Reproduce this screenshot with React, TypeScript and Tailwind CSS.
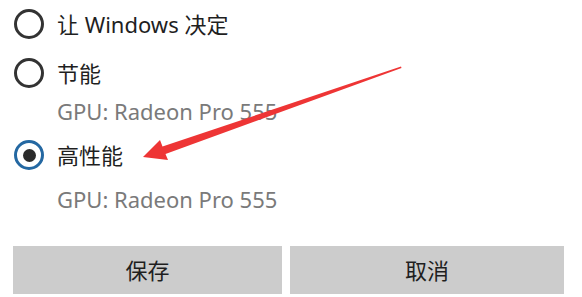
const font = { fontFamily: '"Noto Sans", "Noto Sans CJK SC", sans-serif' };

function Radio({ checked }: { checked?: boolean }) {
  if (checked) {
    return (
      <span className="flex h-[30px] w-[30px] shrink-0 items-center justify-center rounded-full border-[3px] border-[#2468a2] bg-white">
        <span className="h-[13px] w-[13px] rounded-full bg-[#2b2b2b]" />
      </span>
    );
  }
  return <span className="h-[30px] w-[30px] shrink-0 rounded-full border-[3px] border-[#333333] bg-white" />;
}

function Option({ label, checked, h }: { label: string; checked?: boolean; h: string }) {
  return (
    <div className={`flex items-center gap-[13px] pl-[14px] ${h}`}>
      <Radio checked={checked} />
      <span className="text-[22px] leading-none text-[#1f1f1f]">{label}</span>
    </div>
  );
}

function Gpu() {
  return (
    <div className="flex h-[26px] items-center pl-[57px] text-[22px] leading-none text-[#7a7a7a]">
      GPU: Radeon Pro 555
    </div>
  );
}

function Arrow() {
  return (
    <svg className="pointer-events-none absolute left-0 top-0" width="582" height="297" viewBox="0 0 582 297">
      <polygon
        points="143,157 160,140 162.5,146.5 401,66.5 401.5,68 165.5,154 168,160"
        fill="#ee3535"
      />
    </svg>
  );
}

export default function App() {
  return (
    <div className="relative h-[297px] w-[582px] overflow-hidden bg-white" style={font}>
      <div className="flex flex-col">
        <Option label="让 Windows 决定" h="h-[48px]" />
        <Option label="节能" h="h-[50px]" />
        <Gpu />
        <Option label="高性能" checked h="h-[62px]" />
        <Gpu />
        <div className="mt-[34px] flex gap-[8px] pl-[13px]">
          <button className="flex h-[48px] w-[269px] items-center justify-center bg-[#cccccc] text-[22px] text-[#1f1f1f]">
            保存
          </button>
          <button className="flex h-[48px] w-[274px] items-center justify-center bg-[#cccccc] text-[22px] text-[#1f1f1f]">
            取消
          </button>
        </div>
      </div>
      <Arrow />
    </div>
  );
}
